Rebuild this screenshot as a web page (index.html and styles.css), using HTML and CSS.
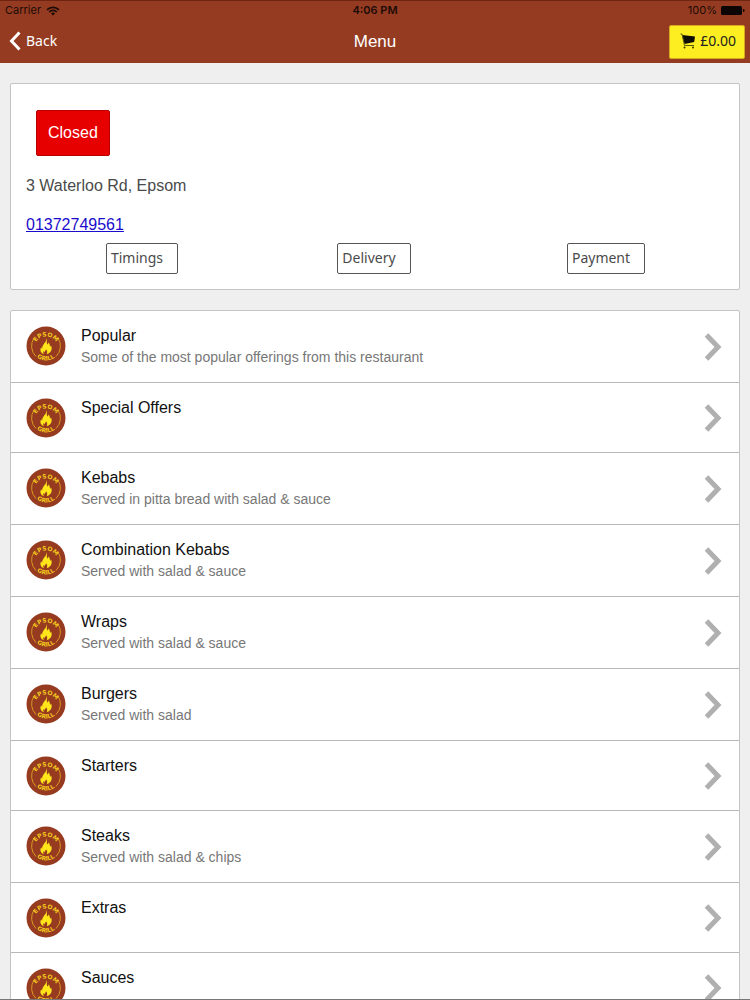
FILE: index.html
```
<!DOCTYPE html>
<html lang="en">
<head>
    <meta charset="UTF-8">
    <meta name="viewport" content="width=device-width, initial-scale=1.0">
    <title>Menu</title>
    <link rel="stylesheet" href="styles.css">
</head>
<body>
    <!-- shared icons -->
    <svg class="sprite" aria-hidden="true">
        <defs>
            <path id="arcTop" d="M8 22.500a12 12 0 0 1 24 0"/>
            <path id="arcBottom" d="M5.500 20a14.500 14.500 0 0 0 29 0"/>
        </defs>
        <symbol id="logo" viewBox="0 0 40 40">
            <circle cx="20" cy="20" r="19.5" fill="#963a20"/>
            <path d="M8 12A14.600 14.600 0 0 0 10 30.500M32 12A14.600 14.600 0 0 1 30 30.500" fill="none" stroke="#d99a20"/>
            <path transform="translate(0 3.500) scale(1 .88)" d="M20.500 9.500c1 3-.5 5.500 1 7.500.7-.7 1-1.500.8-2.500 2 2 1.200 4 2 5 .6-.4.700-1 .6-1.700 1.700 3.400.9 8.200-4.100 10.200.9-2.800.3-4.200-.8-5.500-.2 1.800-1.500 2-1.500 3.500-.5-.5-.6-1-.6-1.700-1 1.200-.7 2.700.1 3.800-3.700-1.600-4.300-5.100-2.800-8 .2.900.5 1.300 1 1.500-.2-4.600 4.700-6.600 4.300-12.100z" fill="#ffe51a"/>
            <text class="logo-text"><textPath href="#arcTop" startOffset="50%" text-anchor="middle">EPSOM</textPath></text>
            <text class="logo-text"><textPath href="#arcBottom" startOffset="50%" text-anchor="middle">GRILL</textPath></text>
        </symbol>
        <symbol id="chevron" viewBox="0 0 18 30">
            <path d="M2.500 3L14 15 2.500 27" fill="none" stroke="#b0b0b0" stroke-width="5"/>
        </symbol>
    </svg>

    <!-- HEADER -->
    <header class="header">
        <div class="status">
            <span class="carrier">Carrier
                <svg width="14" height="10" viewBox="0 0 14 10" fill="none" stroke="#1c0b06" stroke-width="1.700">
                    <path d="M1 3.800a8.500 8.500 0 0 1 12 0M3.200 6a5.400 5.400 0 0 1 7.600 0"/>
                    <path d="M7 9.500L5 7.500a2.800 2.800 0 0 1 4 0z" fill="#1c0b06" stroke="none"/>
                </svg>
            </span>
            <span class="time">4:06 PM</span>
            <span class="battery">100%
                <svg width="24" height="9" viewBox="0 0 24 9" fill="#0c0503">
                    <rect width="21" height="9" rx="1.500"/>
                    <path d="M22 3c2.200.2 2.200 2.800 0 3z"/>
                </svg>
            </span>
        </div>
        <nav class="bar">
            <a href="#" class="back">
                <svg width="12" height="20" viewBox="0 0 12 20"><path d="M10.500 1.500L2.500 10l8 8.500" fill="none" stroke="#fff" stroke-width="3"/></svg>
                Back
            </a>
            <h1>Menu</h1>
            <button type="button" class="basket">
                <svg width="16" height="16" viewBox="0 0 16 16">
                    <path d="M2 2L15 3.500 14.200 9 4.500 11z" fill="#0d0d05"/>
                    <path d="M.5 1h1.500l2.500 11.500h9.500" fill="none" stroke="#5c5a10"/>
                    <circle cx="4.500" cy="14.500" r="1" fill="#3c3a08"/>
                    <circle cx="13" cy="14.500" r="1" fill="#3c3a08"/>
                </svg>
                £0.00
            </button>
        </nav>
    </header>

    <main>
        <!-- RESTAURANT INFO -->
        <section class="card info">
            <span class="closed">Closed</span>
            <p>3 Waterloo Rd, Epsom</p>
            <a href="tel:01372749561" class="phone">01372749561</a>
            <div class="actions">
                <button type="button">Timings</button>
                <button type="button">Delivery</button>
                <button type="button">Payment</button>
            </div>
        </section>

        <!-- MENU CATEGORIES -->
        <section class="card list">
            <a href="#" class="item">
                <svg class="logo"><use href="#logo"/></svg>
                <div class="text"><h2>Popular</h2><p>Some of the most popular offerings from this restaurant</p></div>
                <svg class="chevron"><use href="#chevron"/></svg>
            </a>
            <a href="#" class="item">
                <svg class="logo"><use href="#logo"/></svg>
                <div class="text"><h2>Special Offers</h2></div>
                <svg class="chevron"><use href="#chevron"/></svg>
            </a>
            <a href="#" class="item">
                <svg class="logo"><use href="#logo"/></svg>
                <div class="text"><h2>Kebabs</h2><p>Served in pitta bread with salad &amp; sauce</p></div>
                <svg class="chevron"><use href="#chevron"/></svg>
            </a>
            <a href="#" class="item">
                <svg class="logo"><use href="#logo"/></svg>
                <div class="text"><h2>Combination Kebabs</h2><p>Served with salad &amp; sauce</p></div>
                <svg class="chevron"><use href="#chevron"/></svg>
            </a>
            <a href="#" class="item">
                <svg class="logo"><use href="#logo"/></svg>
                <div class="text"><h2>Wraps</h2><p>Served with salad &amp; sauce</p></div>
                <svg class="chevron"><use href="#chevron"/></svg>
            </a>
            <a href="#" class="item">
                <svg class="logo"><use href="#logo"/></svg>
                <div class="text"><h2>Burgers</h2><p>Served with salad</p></div>
                <svg class="chevron"><use href="#chevron"/></svg>
            </a>
            <a href="#" class="item">
                <svg class="logo"><use href="#logo"/></svg>
                <div class="text"><h2>Starters</h2></div>
                <svg class="chevron"><use href="#chevron"/></svg>
            </a>
            <a href="#" class="item">
                <svg class="logo"><use href="#logo"/></svg>
                <div class="text"><h2>Steaks</h2><p>Served with salad &amp; chips</p></div>
                <svg class="chevron"><use href="#chevron"/></svg>
            </a>
            <a href="#" class="item">
                <svg class="logo"><use href="#logo"/></svg>
                <div class="text"><h2>Extras</h2></div>
                <svg class="chevron"><use href="#chevron"/></svg>
            </a>
            <a href="#" class="item">
                <svg class="logo"><use href="#logo"/></svg>
                <div class="text"><h2>Sauces</h2></div>
                <svg class="chevron"><use href="#chevron"/></svg>
            </a>
        </section>
    </main>
</body>
</html>
```

FILE: styles.css
```
* {
    box-sizing: border-box;
}
body {
    margin: 0;
    height: 100vh;
    overflow: hidden;
    display: flex;
    flex-direction: column;
    font-family: "Liberation Sans", Arial, sans-serif;
    font-size: 16px;
    color: #4a4a4a;
    background-color: #efeff0;
    border-bottom: 1px solid #777;
}
h1, h2, p {
    margin: 0;
    font-weight: normal;
}
.sprite {
    display: none;
}

/* header */
.header {
    flex: none;
    background-color: #943b21;
    border-top: 1px solid #6e2410;
}
.status {
    display: grid;
    grid-template-columns: 1fr auto 1fr;
    padding: 0 5px;
    font-family: Inter, sans-serif;
    font-size: 11px;
    line-height: 19px;
    color: #1c0b06;
}
.carrier, .battery {
    display: flex;
    align-items: center;
    gap: 5px;
}
.battery {
    justify-content: flex-end;
    gap: 4px;
}
.time {
    font-weight: 600;
}
.bar {
    display: grid;
    grid-template-columns: 1fr auto 1fr;
    align-items: center;
    height: 43px;
    padding: 0 5px;
    color: #fff;
}
.bar h1 {
    font-size: 17px;
    line-height: 20px;
}
.back {
    display: flex;
    align-items: center;
    gap: 5px;
    padding: 0 0 2px 4px;
    font-family: "Noto Sans", sans-serif;
    font-size: 14px;
    color: #fff;
    text-decoration: none;
}
.basket {
    justify-self: end;
    display: flex;
    align-items: center;
    gap: 4px;
    height: 34px;
    padding: 0 8px 2px 10px;
    font-family: "Noto Sans", sans-serif;
    font-size: 14px;
    color: #222;
    background-color: #fcee21;
    border: 1px solid #d9a81c;
    border-radius: 2px;
}

/* cards */
main {
    flex: 1;
    min-height: 0;
    overflow: hidden;
    padding: 20px 10px 0;
}
.card {
    background-color: #fff;
    border: 1px solid #c4c4c6;
    border-radius: 2px;
    margin-bottom: 20px;
}
.info {
    padding: 26px 15px 15px;
}
.closed {
    display: block;
    width: max-content;
    margin-left: 10px;
    padding: 0 11px;
    line-height: 44px;
    color: #fff;
    background-color: #e60000;
    border: 1px solid #b80000;
    border-radius: 2px;
}
.info p {
    margin-top: 20px;
    line-height: 20px;
}
.phone {
    display: block;
    width: max-content;
    margin-top: 19px;
    line-height: 20px;
    color: #1a0dcc;
}
.actions {
    display: grid;
    grid-template-columns: repeat(3, 1fr);
    justify-items: center;
    margin-top: 8px;
    padding-right: 2px;
}
.actions button {
    height: 31px;
    padding: 0 14px 2px 4px;
    font-family: "Noto Sans", sans-serif;
    font-size: 14px;
    color: #4a4a4a;
    background-color: #fff;
    border: 1px solid #555;
    border-radius: 2px;
}

/* category list */
.item {
    display: flex;
    align-items: center;
    height: 70px;
    padding: 0 17px 0 15px;
    color: #111;
    text-decoration: none;
    border-bottom: 1px solid #b8b8b8;
}
.item:has(p) {
    height: 72px;
}
.logo {
    flex: none;
    align-self: flex-start;
    width: 40px;
    height: 40px;
    margin-top: 15px;
}
.logo-text {
    font: bold 6px "DejaVu Sans", sans-serif;
    fill: #f2c71d;
}
.text {
    flex: 1;
    align-self: flex-start;
    padding: 15px 15px 0;
}
.text h2 {
    font-size: 16px;
    line-height: 20px;
}
.text p {
    margin-top: 2px;
    font-size: 14px;
    line-height: 18px;
    color: #777;
}
.chevron {
    flex: none;
    width: 18px;
    height: 30px;
}
```
